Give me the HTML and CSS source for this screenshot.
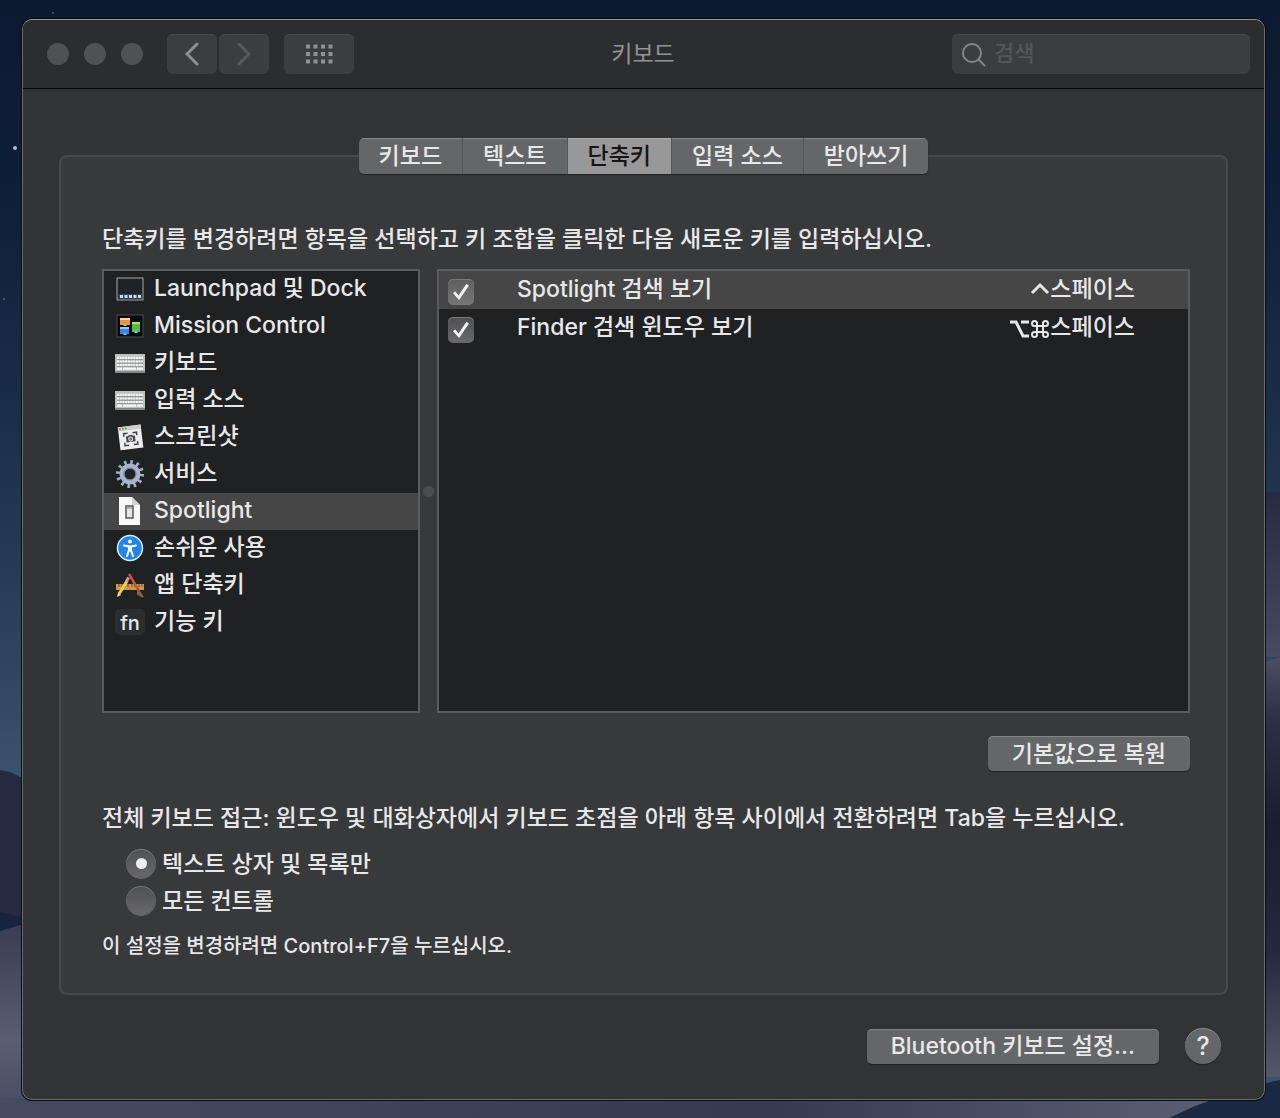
FILE: index.html
```html
<!DOCTYPE html>
<html lang="ko">
<head>
<meta charset="utf-8">
<meta name="viewport" content="width=device-width, initial-scale=1">
<title>키보드</title>
<link rel="stylesheet" href="styles.css">
</head>
<body>
<svg class="wallpaper" viewBox="0 0 1280 1118" preserveAspectRatio="none" aria-hidden="true">
  <defs>
    <linearGradient id="sky" x1="0" y1="0" x2="0" y2="1"><stop offset="0" stop-color="#0c1930"/><stop offset=".2" stop-color="#10203a"/><stop offset=".5" stop-color="#243a56"/><stop offset=".7" stop-color="#3b536f"/></linearGradient>
    <linearGradient id="dune" x1="0" y1="0" x2="0" y2="1"><stop offset="0" stop-color="#393c52"/><stop offset=".6" stop-color="#5b5e71"/><stop offset="1" stop-color="#424a60"/></linearGradient>
    <linearGradient id="ridge" x1="0" y1="0" x2="0" y2="1"><stop offset="0" stop-color="#242b42"/><stop offset="1" stop-color="#464b62"/></linearGradient>
    <linearGradient id="slope" x1="0" y1="0" x2="0" y2="1"><stop offset="0" stop-color="#4a4f65"/><stop offset=".15" stop-color="#2b3046"/><stop offset=".4" stop-color="#181d30"/><stop offset=".7" stop-color="#23293e"/><stop offset="1" stop-color="#54586c"/></linearGradient>
    <linearGradient id="sand" x1="0" y1="0" x2="1" y2="0"><stop offset="0" stop-color="#454b60"/><stop offset=".6" stop-color="#343b50"/><stop offset="1" stop-color="#60647a"/></linearGradient>
  </defs>
  <rect width="1280" height="1118" fill="url(#sky)"/>
  <path d="M0 770l10 2 12 6v180H0z" fill="#252a40"/>
  <path d="M0 912l22 5v30H0z" fill="#18233f"/>
  <path d="M0 931l24-7v194H0z" fill="url(#dune)"/>
  <path d="M1262 492h18v165h-18z" fill="url(#ridge)"/>
  <path d="M1262 627l18-6v420h-18z" fill="url(#slope)" transform="translate(0 36)"/>
  <path d="M0 1098h1280v20H0z" fill="url(#sand)"/>
  <path d="M1169 1118q50-25 111-38v38z" fill="#1b2843"/>
  <circle cx="15" cy="148" r="2" fill="#b7bdc6"/><circle cx="53" cy="13" r="1" fill="#3a5a80"/><circle cx="4" cy="299" r="1" fill="#53677f"/>
</svg>
<main class="window">
  <header class="toolbar">
    <div class="lights"><span></span><span></span><span></span></div>
    <div class="nav">
      <button type="button" class="tool" aria-label="뒤로"><svg width="14" height="24" viewBox="0 0 14 24"><path d="M12 2L2 12l10 10" stroke="#8d8e8f"/></svg></button>
      <button type="button" class="tool" aria-label="앞으로"><svg width="14" height="24" viewBox="0 0 14 24"><path d="M2 2l10 10L2 22" stroke="#58595a"/></svg></button>
    </div>
    <button type="button" class="tool grid-tool" aria-label="모두 보기"><svg width="28" height="20" viewBox="0 0 28 20"><path d="M1 2.500h27M1 10h27M1 17.500h27" stroke="#909193" stroke-width="4" stroke-dasharray="4 3.500"/></svg></button>
    <h1>키보드</h1>
    <label class="search"><svg width="24" height="24" viewBox="0 0 24 24"><circle cx="10" cy="10" r="9"/><path d="M16.500 16.500L23 23"/></svg><input type="search" placeholder="검색" aria-label="검색"></label>
  </header>
  <div class="content">
    <nav class="tabs">
      <button type="button">키보드</button><button type="button">텍스트</button><button type="button" class="active">단축키</button><button type="button">입력 소스</button><button type="button">받아쓰기</button>
    </nav>
    <section class="panel">
      <p class="intro">단축키를 변경하려면 항목을 선택하고 키 조합을 클릭한 다음 새로운 키를 입력하십시오.</p>
      <div class="panes">
        <ul class="categories">
          <li><svg viewBox="0 0 30 30"><rect x="2" y="4" width="26" height="22" fill="#202326" stroke="#9dabb2"/><path d="M3 20h24v5H3z" fill="#34404c"/><path d="M5 22.500h21" stroke="#c4dcf5" stroke-width="3" stroke-dasharray="3 1.500"/></svg>Launchpad 및 Dock</li>
          <li><svg viewBox="0 0 30 30"><rect x="2" y="4" width="26" height="22" fill="#08090a" stroke="#4a4c4d"/><path d="M5 7h10v7H5z" fill="#f0913c"/><path d="M5 7h10v2H5z" fill="#ffd4a1"/><path d="M5 16h9v7H5z" fill="#3a83e6"/><path d="M5 16h9v2H5z" fill="#9bcaff"/><path d="M17 11h8v10h-8z" fill="#5cb847"/><path d="M17 11h8v2h-8z" fill="#a1e681"/><path d="M8 15l2-3 2 3zM8 24l2-3 2 3zM19 22l2-3 2 3z" fill="#69c8f5"/></svg>Mission Control</li>
          <li><svg viewBox="0 0 30 30"><use href="#keyboard"/></svg>키보드</li>
          <li><svg viewBox="0 0 30 30"><use href="#keyboard"/></svg>입력 소스</li>
          <li><svg viewBox="0 0 30 30"><g transform="rotate(-7 15 15)"><path d="M4 4h23v23H4z" fill="#eee"/><path d="M4 4h23v4H4z" fill="#cecece"/><circle cx="6" cy="6" r="1" fill="#e66055"/><circle cx="9" cy="6" r="1" fill="#65a865"/><circle cx="12" cy="6" r="1" fill="#55ad5a"/><path d="M9 14v-3h4M18 11h4v3M22 20v3h-4M13 23H9v-3" fill="none" stroke="#414548" stroke-width="1.500"/><path d="M11 14h2l1-1h3l1 1h2v6h-9z" fill="#3f4346"/><circle cx="15.500" cy="17" r="2" fill="#777" stroke="#ddd"/></g></svg>스크린샷</li>
          <li><svg viewBox="0 0 30 30"><circle cx="15" cy="15" r="8" fill="none" stroke="#a8b3ce" stroke-width="5"/><circle cx="15" cy="15" r="12" fill="none" stroke="#a5b1cd" stroke-width="4" stroke-dasharray="2.500 3.783"/><circle cx="15" cy="15" r="6" fill="none" stroke="#6c7b9b"/></svg>서비스</li>
          <li class="selected"><svg viewBox="0 0 30 30"><path d="M4 1h13l8 8v20H4z" fill="#f7f7f7"/><path d="M17 1v8h8z" fill="#d2d2d2"/><path d="M11 10h7v12h-7z" fill="#e7e7e7" stroke="#555" stroke-width="1.500"/><path d="M12 12h5" stroke="#777"/></svg>Spotlight</li>
          <li><svg viewBox="0 0 30 30"><circle cx="15" cy="15" r="12.500" fill="#2485e8" stroke="#d6efff" stroke-width="1.500"/><circle cx="15" cy="8.500" r="2" fill="#fff"/><path d="M9 12.500l5 1M21 12.500l-5 1M14 17l-2 6M16 17l2 6" fill="none" stroke="#fff" stroke-width="2" stroke-linecap="round"/><path d="M13 12.500h4v6h-4z" fill="#fff"/></svg>손쉬운 사용</li>
          <li><svg viewBox="0 0 30 30"><path d="M1 14h28v6H1z" fill="#c99851"/><path d="M4 14v3m3-3v3m3-3v3m3-3v3m4-3v3m3-3v3m4-3v3m3-3v3" stroke="#765229"/><path d="M4 24L12 11" stroke="#f5cd4e" stroke-width="3"/><path d="M11.500 11.500l2-4" stroke="#eb8ea5" stroke-width="3"/><path d="M2 27l1-4 3 2z" fill="#efe1c0"/><path d="M14 4l10 17" stroke="#c85535" stroke-width="2.500"/><path d="M23 20l5 7-5-3z" fill="#8b6040" stroke="#8b6040" stroke-width="2"/></svg>앱 단축키</li>
          <li><svg viewBox="0 0 30 30"><rect y="2" width="30" height="26" rx="5" fill="#2c2d2e"/><text x="15" y="23" text-anchor="middle" class="fn">fn</text></svg>기능 키</li>
        </ul>
        <div class="divider"></div>
        <div class="shortcuts"><table>
          <tr class="selected"><td class="check"><input type="checkbox" checked id="spot"></td><td><label for="spot">Spotlight 검색 보기</label></td><td class="keys"><svg width="20" height="22" viewBox="0 0 20 22"><path d="M2 13l8-8 8 8"/></svg>스페이스</td></tr>
          <tr><td class="check"><input type="checkbox" checked id="find"></td><td><label for="find">Finder 검색 윈도우 보기</label></td><td class="keys"><svg width="20" height="22" viewBox="0 0 20 22"><path d="M0 4h6l7 14h6M11 4h8"/></svg><svg width="20" height="22" viewBox="0 0 20 22"><path d="M7 5.500a2.500 2.500 0 1 0-2.500 2.500h11a2.500 2.500 0 1 0-2.500-2.500v11a2.500 2.500 0 1 0 2.500-2.500h-11a2.500 2.500 0 1 0 2.500 2.500z"/></svg>스페이스</td></tr>
        </table></div>
      </div>
      <div class="restore"><button type="button" class="push">기본값으로 복원</button></div>
      <fieldset>
        <legend>전체 키보드 접근: 윈도우 및 대화상자에서 키보드 초점을 아래 항목 사이에서 전환하려면 Tab을 누르십시오.</legend>
        <label class="radio"><input type="radio" name="access" checked>텍스트 상자 및 목록만</label>
        <label class="radio"><input type="radio" name="access">모든 컨트롤</label>
      </fieldset>
      <p class="hint">이 설정을 변경하려면 Control+F7을 누르십시오.</p>
    </section>
    <footer><button type="button" class="push bluetooth">Bluetooth 키보드 설정...</button><button type="button" class="help" aria-label="도움말">?</button></footer>
  </div>
</main>
<svg class="symbols" aria-hidden="true"><symbol id="keyboard" viewBox="0 0 30 30"><path d="M0 6h30v18H0z" fill="#bfc1c0"/><path d="M0 23h30v2H0z" fill="#858786"/><path d="M2 10h26M2 13.500h26M2 17h26" stroke="#f5f5f5" stroke-width="2.500" stroke-dasharray="2 .7"/><path d="M2 20.500h5m1 0h13m1 0h6" stroke="#f5f5f5" stroke-width="2.500"/><path d="M2 11.700h26M2 15.200h26M2 18.700h26" stroke="#8c8c8c"/></symbol></svg>
</body>
</html>
```
FILE: styles.css
```css
* { box-sizing: border-box; }
body {
  margin: 0;
  padding: 19px 15px 18px 22px;
  min-height: 100vh;
  display: flex;
  position: relative;
  background: #10203a;
  color: #e8e8e9;
  font: 500 23px/36px Inter, "Noto Sans CJK KR", sans-serif;
}
button, input { font: inherit; color: inherit; }
button { border: 0; padding: 0; }
h1, p, ul { margin: 0; padding: 0; }
.wallpaper { position: absolute; inset: 0; width: 100%; height: 100%; }
.symbols { position: absolute; width: 0; height: 0; }
.window {
  position: relative;
  flex: 1;
  display: flex;
  flex-direction: column;
  min-width: 0;
  border: 1px solid #6b6e6f;
  border-top-color: #969898;
  border-radius: 10px;
  background: #323335;
  box-shadow: 0 0 0 1px #070b14;
  overflow: hidden;
}
.toolbar {
  height: 69px;
  display: flex;
  align-items: center;
  padding: 0 14px 0 24px;
  background: #2c2d2f;
  border-bottom: 1px solid #050505;
}
.lights { display: flex; gap: 15px; margin-right: 24px; }
.lights span { width: 22px; height: 22px; border-radius: 50%; background: #505152; }
.nav { display: flex; gap: 2px; margin-right: 15px; }
.tool {
  width: 50px;
  height: 40px;
  display: grid;
  place-items: center;
  border-radius: 6px;
  background: #3c3d3f;
  box-shadow: inset 0 1px #47484a;
}
.tool svg, .search svg, .keys svg { fill: none; }
.tool svg { stroke-width: 3; stroke-linecap: round; }
.grid-tool { width: 70px; }
.grid-tool svg { stroke-linecap: butt; }
h1 { flex: 1; padding-right: 20px; font-size: 23px; font-weight: 400; text-align: center; color: #929394; }
.search {
  width: 298px;
  height: 40px;
  display: flex;
  align-items: center;
  gap: 8px;
  padding: 2px 10px 0;
  border-radius: 6px;
  background: #3c3d3f;
  box-shadow: inset 0 1px #47484a;
}
.search svg { stroke: #858687; stroke-width: 2; flex: none; }
.search input { flex: 1; min-width: 0; height: 36px; padding: 0 0 4px; border: 0; background: none; outline: 0; font-size: 22px; }
.search input::placeholder { color: #555658; opacity: 1; }
.content { flex: 1; padding: 49px 36px 35px; display: flex; flex-direction: column; }
.tabs { position: relative; z-index: 1; align-self: center; display: flex; margin-bottom: -19px; border-radius: 5px; overflow: hidden; box-shadow: 0 1px 1px #222; }
.tabs button { height: 36px; padding: 0 20px; line-height: 34px; background: #656668; box-shadow: inset 0 1px #858688; }
.tabs button + button { border-left: 1px solid #555658; }
.tabs .active { background: #989898; color: #151515; box-shadow: inset 0 1px #aaa; }
.panel { flex: 1; padding: 64px 36px 0 41px; border: 2px solid #48494b; border-radius: 8px; background: #38393b; }
.intro { padding-bottom: 12px; }
.panes { display: flex; height: 444px; }
.categories, .shortcuts { border: 2px solid #595b5c; background: #202123; }
.categories { width: 318px; list-style: none; }
.categories li { height: 37px; display: flex; align-items: center; gap: 9px; padding: 0 0 4px 11px; white-space: nowrap; }
.categories svg { width: 30px; height: 30px; flex: none; margin-top: 3px; }
.selected { background: #464646; }
.fn { font: 500 20px Inter, sans-serif; fill: #e8e8e9; }
.divider { width: 17px; display: grid; place-items: center; }
.divider::before { content: ""; width: 11px; height: 11px; border-radius: 50%; background: #4c4d4f; }
.shortcuts { flex: 1; }
table { width: 100%; border-collapse: collapse; }
td { height: 38px; padding: 0; line-height: 36px; vertical-align: top; }
.check { width: 78px; padding-left: 9px; }
.keys { text-align: right; padding-right: 53px; white-space: nowrap; }
.keys svg { vertical-align: middle; stroke: #e8e8e9; stroke-width: 3; }
.keys svg:nth-of-type(2) { stroke-width: 2; }
input[type="checkbox"], input[type="radio"] {
  appearance: none;
  flex: none;
  display: grid;
  place-items: center;
  margin: 0;
  background: linear-gradient(#4f5052, #69696b);
  box-shadow: inset 0 1px #77787a;
}
input[type="checkbox"] { width: 26px; height: 26px; border-radius: 5px; margin-top: 8px; }
.selected input[type="checkbox"] { background: linear-gradient(#5e5e5e, #777); }
input[type="checkbox"]::before { content: ""; width: 16px; height: 16px; background: #f2f2f2; clip-path: polygon(0 58%, 13% 45%, 35% 72%, 83% 0, 100% 9%, 38% 100%); }
input[type="radio"] { width: 30px; height: 30px; border-radius: 50%; }
input[type="radio"]:checked::before { content: ""; width: 11px; height: 11px; border-radius: 50%; background: #eee; }
.restore { display: flex; justify-content: flex-end; padding: 23px 0 29px; }
.push { height: 35px; padding: 0 24px; line-height: 34px; border-radius: 5px; background: #656668; box-shadow: inset 0 1px #858688, 0 1px 1px #222; }
fieldset { margin: 0; padding: 0; border: 0; }
legend { padding: 0; margin-bottom: 9px; }
.radio { display: flex; align-items: center; gap: 6px; height: 37px; margin-left: 24px; width: fit-content; }
.hint { padding-top: 9px; font-size: 20px; }
footer { display: flex; justify-content: flex-end; align-items: center; gap: 26px; padding: 33px 7px 0 0; }
.help { width: 36px; height: 36px; border-radius: 50%; background: #656668; box-shadow: inset 0 1px #858688, 0 1px 1px #222; font-size: 25px; }
```
